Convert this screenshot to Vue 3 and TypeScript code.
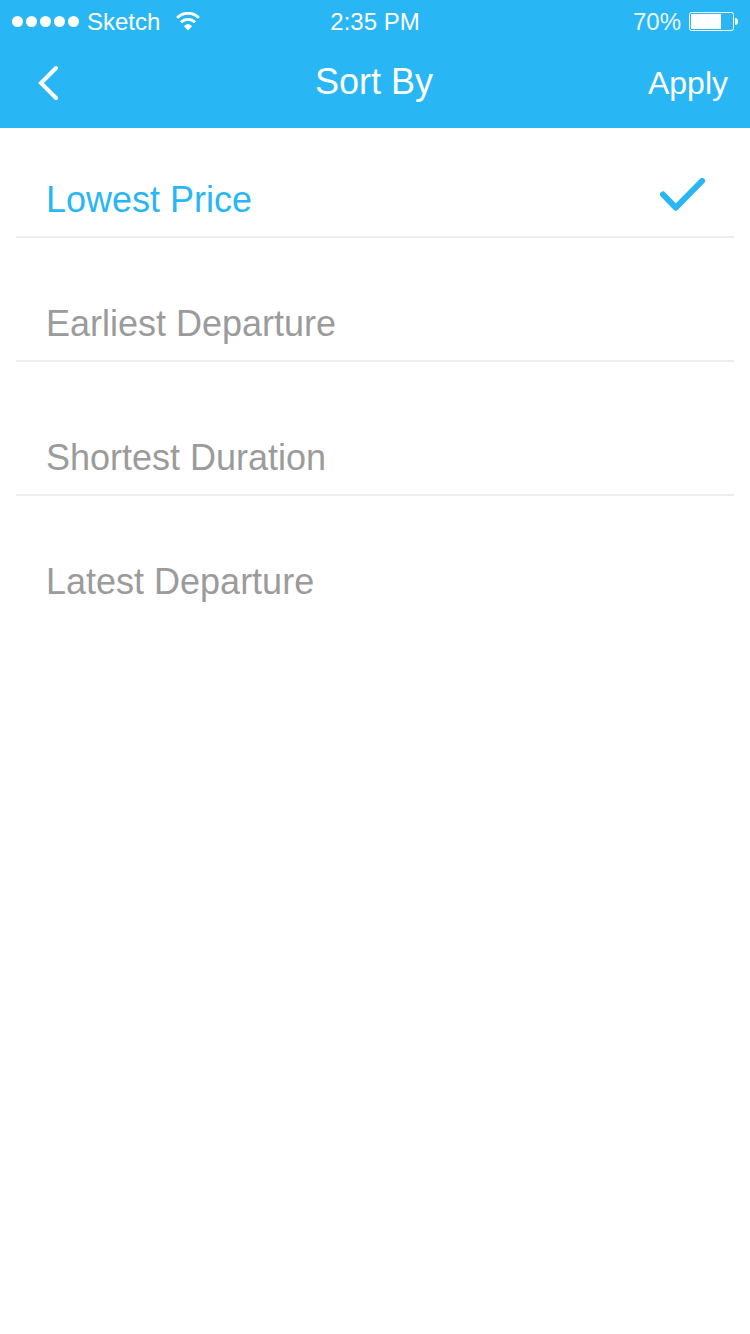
<script setup lang="ts">
import { ref } from 'vue'

interface SortOption {
  id: string
  label: string
}

const options: SortOption[] = [
  { id: 'lowest-price', label: 'Lowest Price' },
  { id: 'earliest-departure', label: 'Earliest Departure' },
  { id: 'shortest-duration', label: 'Shortest Duration' },
  { id: 'latest-departure', label: 'Latest Departure' },
]

const selected = ref<string>('lowest-price')
const applied = ref<string>('lowest-price')

function apply(): void {
  applied.value = selected.value
}

function back(): void {
  selected.value = applied.value
}
</script>

<template>
  <div class="screen">
    <header class="header">
      <div class="status">
        <div class="carrier">
          <span class="signal">
            <span v-for="n in 5" :key="n" class="dot"></span>
          </span>
          <span>Sketch</span>
          <svg class="wifi" width="24" height="19" viewBox="0 0 24 19" aria-hidden="true">
            <path d="M1.200 5.900C7-.3 17-.3 22.800 5.900" fill="none" stroke="#fff" stroke-width="2.800" />
            <path d="M5 10.300C8.800 6.400 15.200 6.400 19 10.300" fill="none" stroke="#fff" stroke-width="2.800" />
            <path d="M8 14.200C10.200 11.700 13.800 11.700 16 14.200L12 18.400Z" fill="#fff" />
          </svg>
        </div>
        <time class="clock">2:35 PM</time>
        <div class="power">
          <span class="percent">70%</span>
          <svg width="49" height="19" viewBox="0 0 49 19" aria-hidden="true">
            <rect x=".5" y=".5" width="44" height="18" rx="2" fill="none" stroke="#fff" />
            <rect x="2" y="2" width="30" height="15" fill="#fff" />
            <path d="M46 6h.6c1.500 0 2.400 1.300 2.400 3.500s-.9 3.500-2.400 3.500H46Z" fill="#fff" />
          </svg>
        </div>
      </div>
      <nav class="bar">
        <button class="back" type="button" aria-label="Back" @click="back">
          <svg width="20" height="36" viewBox="0 0 20 36" aria-hidden="true">
            <path d="M18 3L3 18L18 33" fill="none" stroke="#fff" stroke-width="4" stroke-linecap="round" />
          </svg>
        </button>
        <h1 class="title">Sort By</h1>
        <button class="apply" type="button" @click="apply">Apply</button>
      </nav>
    </header>

    <main class="options" role="radiogroup" aria-label="Sort By">
      <label
        v-for="option in options"
        :key="option.id"
        class="option"
        :class="[option.id, { active: selected === option.id }]"
        :for="option.id"
      >
        <input :id="option.id" v-model="selected" class="radio" type="radio" name="sort" :value="option.id" />
        <span class="name">{{ option.label }}</span>
        <svg v-if="selected === option.id" class="check" width="46" height="34" viewBox="0 0 46 34" aria-hidden="true">
          <path d="M3 16.500L15.800 29.700L42 3" fill="none" stroke="#29b6f5" stroke-width="6" stroke-linecap="round" stroke-linejoin="round" />
        </svg>
      </label>
    </main>
  </div>
</template>

<style>
body {
  margin: 0;
  background: #fff;
}
</style>

<style scoped>
.screen {
  min-height: 100vh;
  background: #fff;
  font-family: "Liberation Sans", Arial, sans-serif;
}

.header {
  background: #29b6f5;
  color: #fff;
}

.status,
.bar {
  display: grid;
  grid-template-columns: 1fr auto 1fr;
  align-items: center;
}

.status {
  height: 43px;
  padding: 0 12px;
  font-size: 24px;
  line-height: 28px;
}

.carrier,
.signal,
.power {
  display: flex;
  align-items: center;
}

.carrier {
  gap: 8px;
}

.signal {
  gap: 3px;
}

.dot {
  width: 11px;
  height: 11px;
  border-radius: 50%;
  background: #fff;
}

.wifi {
  margin-left: 8px;
}

.power {
  justify-content: flex-end;
  gap: 8px;
}

.percent {
  opacity: 0.9;
}

.bar {
  height: 85px;
  box-sizing: border-box;
  padding: 0 22px 8px 20px;
}

.back,
.apply {
  border: 0;
  background: none;
  color: inherit;
  font-family: inherit;
  cursor: pointer;
}

.back {
  display: flex;
  justify-self: start;
  padding: 2px 18px 0;
}

.title {
  margin: 0;
  font-size: 36px;
  font-weight: 400;
  line-height: 40px;
}

.apply {
  justify-self: end;
  padding: 2px 0 0;
  font-size: 32px;
  line-height: 40px;
}

.options {
  display: flex;
  flex-direction: column;
  padding: 0 16px;
}

.option {
  display: flex;
  align-items: flex-start;
  padding: 66px 28px 16px;
  border-bottom: 2px solid #eee;
  color: #9b9b9b;
  font-size: 36px;
  line-height: 40px;
  cursor: pointer;
}

.lowest-price {
  padding-top: 52px;
}

.shortest-duration {
  padding-top: 76px;
}

.option:last-child {
  border-bottom: 0;
}

.active {
  color: #29b6f5;
}

.radio {
  appearance: none;
  width: 0;
  height: 0;
  margin: 0;
}

.name {
  flex: 1;
  padding-left: 2px;
}

.check {
  margin-top: -2px;
}

.option:has(.radio:focus-visible),
.back:focus-visible,
.apply:focus-visible {
  outline: 2px solid currentColor;
}
</style>
